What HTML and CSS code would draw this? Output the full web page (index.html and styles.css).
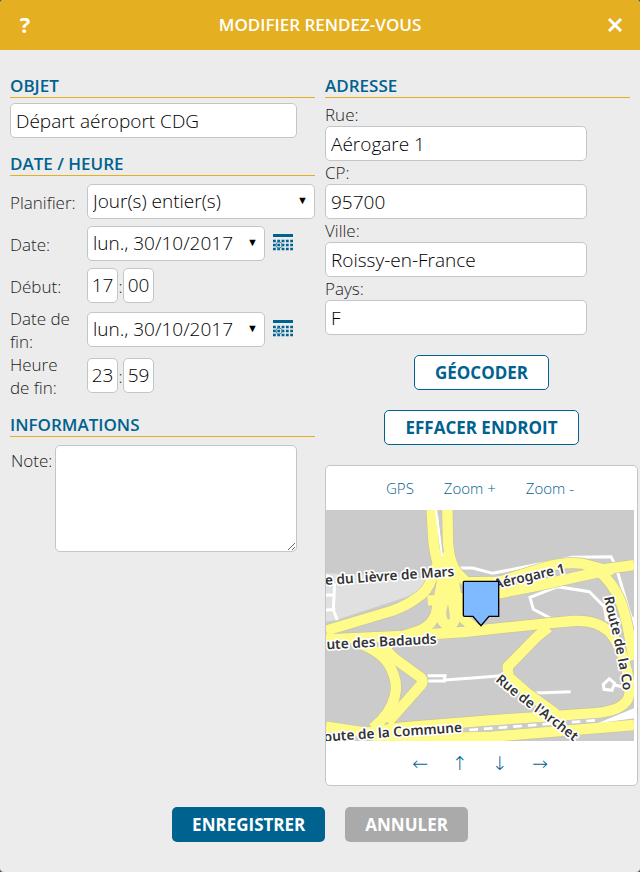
FILE: index.html
```html
<!DOCTYPE html>
<html lang="fr">
<head>
  <meta charset="UTF-8" />
  <meta name="viewport" content="width=device-width, initial-scale=1.0"/>
  <title>Modifier rendez-vous</title>
  <link rel="stylesheet" href="styles.css">
</head>
<body>

  <form class="dialog">
    <header class="dialog-header">
      <button type="button" class="header-btn" aria-label="Aide">?</button>
      <h1>MODIFIER RENDEZ-VOUS</h1>
      <button type="button" class="header-btn" aria-label="Fermer">
        <svg width="16" height="16" viewBox="0 0 16 16"><path d="M2 3 L14 15 M14 3 L2 15" stroke="#fff" stroke-width="3"/></svg>
      </button>
    </header>

    <div class="columns">
      <div class="column">
        <section>
          <h2><label for="objet">OBJET</label></h2>
          <input type="text" id="objet" class="subject" value="Départ aéroport CDG">
        </section>

        <section class="schedule">
          <h2>DATE / HEURE</h2>
          <div class="row">
            <label for="planifier">Planifier:</label>
            <span class="select wide"><select id="planifier"><option>Jour(s) entier(s)</option></select></span>
          </div>
          <div class="row">
            <label for="date">Date:</label>
            <span class="select"><select id="date"><option>lun., 30/10/2017</option></select></span>
            <button type="button" class="calendar" aria-label="Calendrier">
              <svg width="20" height="18" viewBox="0 0 20 18"><path d="M0 1.5H20" stroke="#00628f" stroke-width="3"/><path d="M0 7H20M0 11H20M0 15H20" stroke="#00628f" stroke-width="2.4" stroke-dasharray="2.8 1.5"/><circle cx="6" cy="11" r="3" fill="none" stroke="#4c90b0"/></svg>
            </button>
          </div>
          <div class="row">
            <label for="debut">Début:</label>
            <input type="text" id="debut" class="time" value="17"><span class="colon">:</span><input type="text" class="time" aria-label="Minutes de début" value="00">
          </div>
          <div class="row">
            <label for="datefin">Date de fin:</label>
            <span class="select"><select id="datefin"><option>lun., 30/10/2017</option></select></span>
            <button type="button" class="calendar" aria-label="Calendrier">
              <svg width="20" height="18" viewBox="0 0 20 18"><path d="M0 1.5H20" stroke="#00628f" stroke-width="3"/><path d="M0 7H20M0 11H20M0 15H20" stroke="#00628f" stroke-width="2.4" stroke-dasharray="2.8 1.5"/><circle cx="6" cy="11" r="3" fill="none" stroke="#4c90b0"/></svg>
            </button>
          </div>
          <div class="row">
            <label for="heurefin">Heure de fin:</label>
            <input type="text" id="heurefin" class="time" value="23"><span class="colon">:</span><input type="text" class="time" aria-label="Minutes de fin" value="59">
          </div>
        </section>

        <section class="infos">
          <h2>INFORMATIONS</h2>
          <div class="note">
            <label for="note">Note:</label>
            <textarea id="note"></textarea>
          </div>
        </section>
      </div>

      <div class="column">
        <section class="address">
          <h2>ADRESSE</h2>
          <label for="rue">Rue:</label>
          <input type="text" id="rue" value="Aérogare 1">
          <label for="cp">CP:</label>
          <input type="text" id="cp" value="95700">
          <label for="ville">Ville:</label>
          <input type="text" id="ville" value="Roissy-en-France">
          <label for="pays">Pays:</label>
          <input type="text" id="pays" value="F">
        </section>

        <div class="actions">
          <button type="button" class="btn outline">GÉOCODER</button>
          <button type="button" class="btn outline">EFFACER ENDROIT</button>
        </div>

        <div class="map-box">
          <nav class="map-links">
            <a href="#">GPS</a>
            <a href="#">Zoom +</a>
            <a href="#">Zoom -</a>
          </nav>
          <svg class="map" viewBox="0 0 924 693">
            <defs>
              <path id="route" d="M834 262 Q843 310 857 360 Q878 450 895 560 L905 640 L910 690"/>
              <path id="archet" d="M507 512 Q560 558 622 603 Q690 650 775 722"/>
              <g id="roads">
                <path d="M317 0 L322 90 Q326 130 336 160 L317 205 Q305 245 275 262 Q245 285 200 302 L0 362"/>
                <path d="M364 0 L366 100 Q370 160 395 190 L425 220"/>
                <path d="M336 150 L348 215 L330 310 Q320 345 280 362 L210 385"/>
                <path d="M366 130 L350 200 L360 240 L346 300 Q342 340 367 345 Q390 345 386 310 L372 220 L350 170"/>
                <path d="M378 180 L390 255 L412 325 L455 362"/>
                <path d="M305 272 L440 262"/>
                <path d="M415 217 L520 215 L650 174 Q710 155 770 161 L830 178 L924 165"/>
                <path d="M470 260 L640 226 L770 197 L860 178"/>
                <path d="M818 182 Q860 220 880 265 Q895 300 905 350 L924 450"/>
                <path d="M0 388 L230 378 L412 366 L662 340 L740 333 Q810 328 850 365 Q885 405 902 480 Q922 560 895 580 Q870 605 800 610 L482 632 L230 652 L120 668 L0 650"/>
                <path d="M105 402 Q175 430 195 475 Q218 520 206 560 Q195 610 140 655"/>
                <path d="M165 405 L205 445 L280 500 Q298 512 282 528 L185 638"/>
                <path d="M668 352 L635 378 L545 470 L547 500 L605 550 L690 612"/>
                <path d="M140 690 L500 680 L924 645"/>
              </g>
            </defs>
            <rect width="924" height="693" fill="#cbcbcb"/>
            <path d="M0 190 L310 205 L275 250 L30 330 L0 335Z" fill="#e0e0e0"/>
            <g fill="none" stroke="#fff" stroke-width="9">
              <path d="M330 0 L346 150 M400 174 L440 174 L500 190 L740 142 L855 140 L870 170 L905 290 L924 350"/>
              <path d="M680 328 L622 298 L612 262 L695 230 L790 245 L835 290 L842 330 L924 325"/>
              <path d="M0 195 L20 205 M0 256 L24 254 M0 300 L28 298 M26 220 L22 300 L34 330"/>
              <path d="M300 513 L355 513 L357 497 L305 497 M355 510 L430 505 L525 497 M610 550 L734 545"/>
              <path d="M832 523 L850 506 L866 520 L858 541 L834 538Z M866 525 L900 533"/>
            </g>
            <use href="#roads" fill="none" stroke="#c9c598" stroke-width="35" stroke-linejoin="round"/>
            <use href="#roads" fill="none" stroke="#fffb8a" stroke-width="31" stroke-linejoin="round"/>
            <path d="M330 0 L348 140" stroke="#fff" stroke-width="6"/>
            <path d="M430 660 L820 630" stroke="#cbcbcb" stroke-width="14"/>
            <path d="M430 660 L820 630" stroke="#fff" stroke-width="8" stroke-dasharray="26 18"/>
            <path d="M815 640 L924 595 L924 625Z" fill="#fff"/>
            <g class="street">
              <text transform="translate(-2 225) rotate(-4)">e du Lièvre de Mars</text>
              <text transform="translate(507 237) rotate(-13)">Aérogare 1</text>
              <text transform="translate(2 418) rotate(-3)">ute des Badauds</text>
              <text transform="translate(-6 695) rotate(-4)">oute de la Commune</text>
              <text><textPath href="#route">Route de la Co</textPath></text>
              <text><textPath href="#archet">Rue de l'Archet</textPath></text>
            </g>
            <path d="M414 214 H516 Q518 214 518 217 V319 H489 L465 347 L441 319 H416 Q412 319 412 315 V217 Q412 214 414 214Z" fill="#7fb9ff" stroke="#000" stroke-width="4"/>
          </svg>
          <nav class="map-arrows">
            <a href="#" aria-label="Ouest">←</a>
            <a href="#" aria-label="Nord">↑</a>
            <a href="#" aria-label="Sud">↓</a>
            <a href="#" aria-label="Est">→</a>
          </nav>
        </div>
      </div>
    </div>

    <footer class="dialog-footer">
      <button type="submit" class="btn primary">ENREGISTRER</button>
      <button type="button" class="btn cancel">ANNULER</button>
    </footer>
  </form>

</body>
</html>
```
FILE: styles.css
```css
* {
  box-sizing: border-box;
}

body {
  margin: 0;
  background: #555;
  color: #222;
  font-family: "Open Sans", sans-serif;
  font-size: 17px;
  font-weight: 300;
  line-height: 23px;
}

.dialog {
  min-height: 100vh;
  background: #ececec;
  border-radius: 4px;
  overflow: hidden;
}

.dialog-header {
  display: flex;
  justify-content: space-between;
  align-items: center;
  height: 50px;
  padding: 0 10px 2px;
  background: #e5af22;
  color: #fff;
}

h1 {
  margin: 0;
  font-size: 17px;
  font-weight: 600;
}

.header-btn {
  display: flex;
  justify-content: center;
  align-items: center;
  width: 30px;
  height: 30px;
  padding: 0;
  border: none;
  background: none;
  color: #fff;
  font: 700 22px "Open Sans", sans-serif;
  cursor: pointer;
}

.columns {
  display: grid;
  grid-template-columns: 1fr 1fr;
  gap: 10px;
  padding: 24px 10px 0;
}

h2 {
  margin: 0 0 5px;
  border-bottom: 1px solid #e5af22;
  color: #00628f;
  font-size: 17px;
  font-weight: 600;
  line-height: 23px;
}

input,
select,
textarea {
  height: 35px;
  padding: 0 5px;
  border: 1px solid #c3c6c7;
  border-radius: 5px;
  background: #fff;
  color: #000;
  font: 300 19px "Open Sans", sans-serif;
}

.subject {
  display: block;
  width: 94%;
}

.schedule {
  margin-top: 14px;
}

.row {
  display: flex;
  align-items: center;
  min-height: 42px;
}

.row label {
  flex: 0 0 77px;
  padding-right: 8px;
}

.row label[for="planifier"] {
  padding-right: 0;
}

.row .select,
.row .time,
.row .calendar {
  margin-bottom: 2px;
}

.select {
  position: relative;
  width: 178px;
}

.select.wide {
  flex: 1;
}

.select select {
  display: block;
  width: 100%;
  appearance: none;
}

.select::after {
  content: "▼";
  position: absolute;
  top: 5px;
  right: 7px;
  color: #000;
  font-family: "DejaVu Sans", sans-serif;
  font-size: 11px;
  pointer-events: none;
}

.calendar {
  height: 20px;
  margin-left: 8px;
  padding: 0;
  border: none;
  background: none;
  cursor: pointer;
}

.calendar svg {
  display: block;
}

.time {
  width: 31px;
  text-align: center;
  padding: 0;
}

.colon {
  width: 5px;
  text-align: center;
}

.infos {
  margin-top: 14px;
}

.infos h2 {
  margin-bottom: 8px;
}

.note {
  display: flex;
  width: 94%;
}

.note label {
  flex: 0 0 45px;
  padding: 4px 0 0 1px;
}

.note textarea {
  flex: 1;
  min-width: 0;
  height: 107px;
}

.address label {
  display: block;
  line-height: 23px;
}

.address input {
  display: block;
  width: 86%;
}

.actions {
  display: flex;
  flex-direction: column;
  align-items: center;
  gap: 20px;
  margin: 20px -8px 20px 0;
}

.btn {
  height: 35px;
  padding: 0 20px;
  border: none;
  border-radius: 5px;
  color: #fff;
  font: 700 17px "Open Sans", sans-serif;
  cursor: pointer;
}

.btn.outline {
  border: 1px solid #00628f;
  background: #fff;
  color: #00628f;
}

.btn.primary {
  background: #00628f;
}

.btn.cancel {
  background: #aaa;
}

.map-box {
  margin-right: -8px;
  padding-right: 3px;
  border: 1px solid #c3c6c7;
  border-radius: 5px;
  background: #fff;
}

.map-links,
.map-arrows {
  display: flex;
  justify-content: center;
  align-items: center;
  gap: 30px;
  height: 44px;
  font-size: 15px;
}

.map-box a {
  color: #00628f;
  text-decoration: none;
}

.map {
  display: block;
  width: 100%;
}

.map-arrows {
  font-family: "DejaVu Sans", sans-serif;
  font-size: 19px;
  gap: 24px;
}

.street text {
  fill: #333;
  stroke: #fff;
  stroke-width: 10px;
  stroke-linejoin: round;
  paint-order: stroke;
  font-family: "Noto Sans", sans-serif;
  font-size: 41px;
  font-weight: 600;
}

.dialog-footer {
  display: flex;
  justify-content: center;
  gap: 20px;
  padding: 21px 0 30px;
}
```
